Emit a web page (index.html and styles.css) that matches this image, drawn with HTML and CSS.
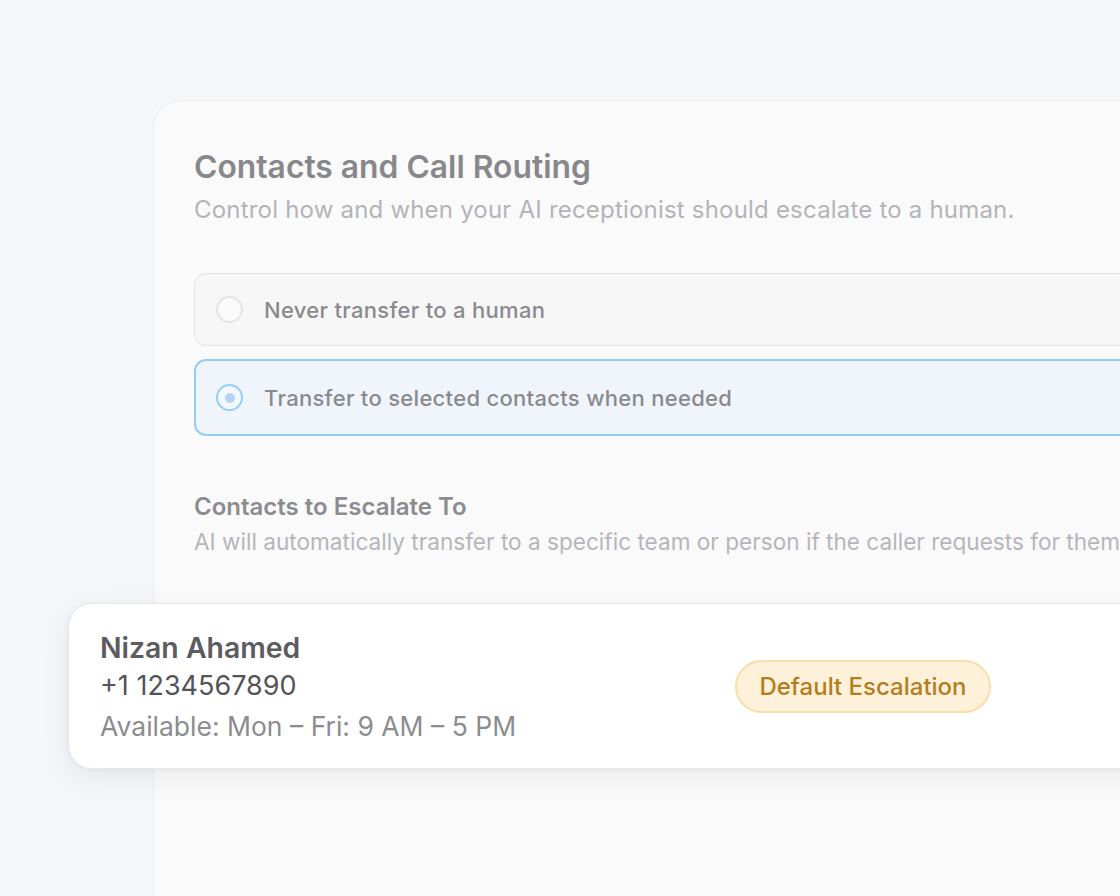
FILE: index.html
```html
<!DOCTYPE html>
<html lang="en">
<head>
<meta charset="utf-8">
<title>Contacts and Call Routing</title>
<link rel="stylesheet" href="styles.css">
</head>
<body>
<div class="stage">
  <section class="panel">
    <h1 class="title">Contacts and Call Routing</h1>
    <p class="subtitle">Control how and when your AI receptionist should escalate to a human.</p>

    <div class="options">
      <label class="option">
        <span class="radio"></span>
        <span class="option-text">Never transfer to a human</span>
      </label>
      <label class="option option-selected">
        <span class="radio radio-on"><span class="dot"></span></span>
        <span class="option-text">Transfer to selected contacts when needed</span>
      </label>
    </div>

    <h2 class="section-title">Contacts to Escalate To</h2>
    <p class="section-sub">AI will automatically transfer to a specific team or person if the caller requests for them.</p>

    <div class="contact-card">
      <div class="contact-info">
        <div class="contact-name">Nizan Ahamed</div>
        <div class="contact-phone">+1 1234567890</div>
        <div class="contact-hours">Available: Mon – Fri: 9 AM – 5 PM</div>
      </div>
      <span class="badge">Default Escalation</span>
    </div>
  </section>
</div>
</body>
</html>
```

FILE: styles.css
```css
html, body {
  margin: 0;
  padding: 0;
}
body {
  width: 1120px;
  height: 896px;
  overflow: hidden;
  background: #f5f6f8;
  font-family: Inter, "Noto Sans", "Liberation Sans", sans-serif;
}
.stage {
  padding: 100px 0 0 153px;
}
.panel {
  width: 1200px;
  min-height: 900px;
  box-sizing: border-box;
  background: #fafafa;
  border: 1px solid #ebebee;
  border-radius: 28px;
  padding: 48px 0 0 40px;
}
.title {
  margin: 0;
  font-size: 31.8px;
  line-height: 36px;
  font-weight: 600;
  color: #88888c;
}
.subtitle {
  margin: 11px 0 0;
  font-size: 24px;
  line-height: 28px;
  color: #b4b4b8;
  letter-spacing: 0.2px;
}
.options {
  margin-top: 49px;
  display: flex;
  flex-direction: column;
  gap: 13px;
}
.option {
  display: flex;
  align-items: center;
  gap: 21px;
  height: 73px;
  box-sizing: border-box;
  padding-left: 21px;
  border: 1px solid #e4e4e7;
  border-radius: 12px;
  background: #f7f7f7;
}
.option-selected {
  height: 77px;
  border: 2px solid #93cdf8;
  background: #f0f5fc;
  padding-left: 20px;
}
.radio {
  width: 27px;
  height: 27px;
  box-sizing: border-box;
  border: 2px solid #e4e4e7;
  border-radius: 50%;
  background: #fafafa;
  display: flex;
  align-items: center;
  justify-content: center;
  flex: none;
}
.radio-on {
  border-color: #93cdf8;
  background: #f3f8fe;
}
.dot {
  width: 10px;
  height: 10px;
  border-radius: 50%;
  background: #b3d4f4;
}
.option-text {
  font-size: 22px;
  line-height: 28px;
  font-weight: 500;
  color: #8a8a8e;
  letter-spacing: 0.3px;
}
.section-title {
  margin: 57px 0 0;
  font-size: 24px;
  line-height: 28px;
  font-weight: 600;
  color: #8c8c90;
}
.section-sub {
  margin: 8px 0 0;
  font-size: 22.6px;
  line-height: 26px;
  color: #b6b6ba;
  white-space: nowrap;
}
.contact-card {
  margin: 48px 0 0 -126px;
  width: 1200px;
  height: 166px;
  box-sizing: border-box;
  background: #ffffff;
  border: 1px solid #e8e8ec;
  border-radius: 24px;
  box-shadow: 0 8px 28px rgba(30, 30, 50, 0.07), 0 1px 4px rgba(30, 30, 50, 0.04);
  display: flex;
  align-items: center;
  padding-left: 31px;
}
.contact-info {
  width: 635px;
  flex: none;
  display: flex;
  flex-direction: column;
}
.contact-name {
  font-size: 28.4px;
  line-height: 34px;
  font-weight: 600;
  color: #5c5c60;
}
.contact-phone {
  margin-top: 5px;
  font-size: 27px;
  line-height: 32px;
  color: #545458;
}
.contact-hours {
  margin-top: 8px;
  font-size: 26.5px;
  line-height: 32px;
  color: #8c8c90;
}
.badge {
  display: inline-flex;
  align-items: center;
  justify-content: center;
  width: 256px;
  height: 53px;
  box-sizing: border-box;
  border: 2px solid #f7dfaa;
  border-radius: 27px;
  background: #fdf1da;
  color: #b57d1d;
  font-size: 24px;
  font-weight: 500;
}
```
